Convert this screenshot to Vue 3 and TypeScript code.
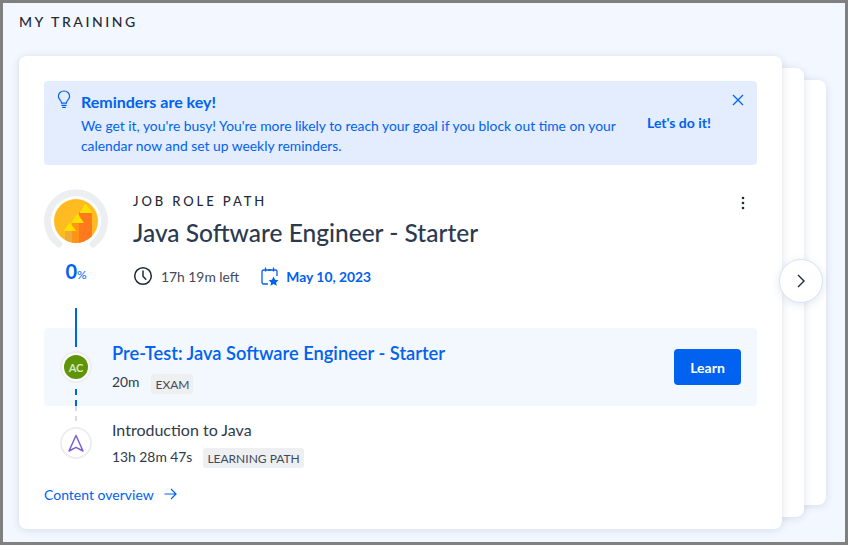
<script setup lang="ts">
interface Step {
  title: string
  time: string
  tag: string
}

const current: Step = { title: 'Pre-Test: Java Software Engineer - Starter', time: '20m', tag: 'EXAM' }
const next: Step = { title: 'Introduction to Java', time: '13h 28m 47s', tag: 'LEARNING PATH' }
</script>

<template>
  <div class="frame">
    <h2 class="page-title">MY TRAINING</h2>
    <div class="stack">
      <div class="back back-far"></div>
      <div class="back back-near"></div>
      <div class="card">
        <div class="reminder">
          <svg class="bulb" width="18" height="20" viewBox="0 0 18 20" fill="none" stroke="#0062ee" stroke-width="1.2" stroke-linecap="round">
            <path d="M6.6 13.2c0-1.6-.7-2.4-1.6-3.4C4.1 8.800 3.400 7.700 3.400 6.300 3.400 3.300 5.900 1 9 1s5.600 2.300 5.600 5.300c0 1.400-.7 2.500-1.600 3.500-.9 1-1.600 1.800-1.600 3.400z" />
            <path d="M6.800 15.300h4.400M7.600 17.300h2.800" />
          </svg>
          <div class="reminder-text">
            <strong>Reminders are key!</strong>
            <p>We get it, you're busy! You're more likely to reach your goal if you block out time on your calendar now and set up weekly reminders.</p>
          </div>
          <a class="reminder-action">Let's do it!</a>
          <svg class="close" width="12" height="12" viewBox="0 0 12 12" stroke="#0062ee" stroke-width="1.300" fill="none">
            <path d="M1 1l10 10M11 1L1 11" />
          </svg>
        </div>

        <div class="path">
          <div class="progress">
            <svg width="64" height="64" viewBox="0 0 64 64">
              <path d="M15 55A28.500 28.500 0 1 1 49 55" fill="none" stroke="#eceef1" stroke-width="7" stroke-linecap="round" />
              <circle cx="32" cy="32" r="22" fill="#ffbb1f" />
              <clipPath id="badge"><circle cx="32" cy="32" r="22" /></clipPath>
              <g clip-path="url(#badge)">
                <rect x="21" y="42" width="11" height="14" fill="#efaa3c" />
                <rect x="28" y="34" width="12" height="22" fill="#ff9419" />
                <rect x="35" y="23" width="13" height="33" fill="#ff7a1c" />
                <path d="M41.500 14.500l7 9.500h-13z" fill="#ffe000" />
                <path d="M33.500 24.500l6.500 9.500h-13z" fill="#ffe000" />
                <path d="M25.500 33.500l7 8.500h-13z" fill="#ffe000" />
              </g>
            </svg>
            <div class="percent">0<small>%</small></div>
          </div>
          <div class="path-info">
            <div class="eyebrow">JOB ROLE PATH</div>
            <h1>Java Software Engineer - Starter</h1>
            <div class="meta">
              <svg width="20" height="20" viewBox="0 0 20 20" fill="none" stroke="#1f2a37" stroke-width="1.500" stroke-linecap="round">
                <circle cx="10" cy="10" r="8.300" />
                <path d="M10 5v5.300l2.800 3" />
              </svg>
              <span class="left">17h 19m left</span>
              <svg class="cal" width="18" height="20" viewBox="0 0 18 20" fill="none" stroke="#0062ee" stroke-width="1.300">
                <path d="M7 18H2.500A1.500 1.500 0 0 1 1 16.500V5.500A1.500 1.500 0 0 1 2.500 4h12A1.500 1.500 0 0 1 16 5.500V10" />
                <path d="M4.500 1.500v4M12.500 1.500v4M7 4h3" />
                <path d="M12.500 10.500l1.700 3.300 3.300.4-2.400 2.300.7 3.300-3.300-1.700-3 1.700.6-3.300-2.400-2.300 3.300-.4z" fill="#0062ee" stroke="none" />
              </svg>
              <span class="date">May 10, 2023</span>
            </div>
          </div>
          <svg class="more" width="4" height="14" viewBox="0 0 4 14" fill="#1f2a37">
            <circle cx="2" cy="2" r="1.300" />
            <circle cx="2" cy="7" r="1.300" />
            <circle cx="2" cy="12" r="1.300" />
          </svg>
        </div>

        <div class="line-top"></div>
        <div class="step step-current">
          <div class="step-marker">
            <div class="avatar"><span>AC</span></div>
          </div>
          <div class="step-body">
            <a class="step-title-current">{{ current.title }}</a>
            <div class="step-meta">
              <span>{{ current.time }}</span>
              <span class="tag">{{ current.tag }}</span>
            </div>
          </div>
          <button class="learn">Learn</button>
          <i class="dash dash-blue"></i>
        </div>
        <div class="step step-next">
          <i class="dash dash-grey"></i>
          <div class="step-marker">
            <div class="avatar avatar-plain">
              <svg width="18" height="19" viewBox="0 0 18 19" fill="none" stroke="#7b5fd0" stroke-width="1.500" stroke-linejoin="round">
                <path d="M9 1.500L16 17l-7-3.600L2 17z" />
              </svg>
            </div>
          </div>
          <div class="step-body">
            <div class="step-title-next">{{ next.title }}</div>
            <div class="step-meta">
              <span>{{ next.time }}</span>
              <span class="tag">{{ next.tag }}</span>
            </div>
          </div>
        </div>

        <a class="overview">
          Content overview
          <svg width="13" height="12" viewBox="0 0 13 12" fill="none" stroke="#0062ee" stroke-width="1.200">
            <path d="M0.500 6h11.500M7 1l5 5-5 5" />
          </svg>
        </a>
      </div>
      <button class="next-btn">
        <svg width="10" height="14" viewBox="0 0 10 14" fill="none" stroke="#1f2a37" stroke-width="1.400">
          <path d="M2 1l6 6-6 6" />
        </svg>
      </button>
    </div>
  </div>
</template>

<style scoped>
.frame {
  box-sizing: border-box;
  width: 848px;
  height: 545px;
  border: 3px solid #808080;
  background: #f3f7ff;
  padding: 0 16px;
  font-family: Lato, "Liberation Sans", sans-serif;
  color: #2a3647;
  overflow: hidden;
}
.page-title {
  margin: 0;
  height: 53px;
  padding-top: 10px;
  box-sizing: border-box;
  font-size: 14px;
  line-height: 17px;
  font-weight: 500;
  letter-spacing: 2.550px;
  color: #1f2a37;
}
.stack {
  display: grid;
  width: 807px;
  height: 473px;
  position: relative;
}
.stack > .back,
.stack > .card {
  grid-area: 1 / 1;
}
.back {
  background: #fff;
  border-radius: 8px;
  box-shadow: 0 1px 8px rgba(40, 60, 110, 0.14);
}
.back-far {
  margin: 24px 0 24px 100px;
}
.back-near {
  margin: 12px 22px 12px 100px;
}
.card {
  position: relative;
  box-sizing: border-box;
  width: 763px;
  height: 473px;
  padding: 25px;
  background: #fff;
  border-radius: 8px;
  box-shadow: 0 1px 8px rgba(40, 60, 110, 0.14);
}
.reminder {
  position: relative;
  display: flex;
  box-sizing: border-box;
  height: 84px;
  padding: 10px 12px;
  background: #e3edfd;
  border-radius: 4px;
  color: #0062ee;
}
.bulb {
  flex: none;
  margin: -1px 0 0 -1px;
}
.reminder-text {
  width: 542px;
  margin-left: 8px;
  font-size: 13.850px;
  line-height: 20px;
}
.reminder-text strong {
  display: block;
  font-size: 16px;
  line-height: 22px;
  font-weight: 700;
}
.reminder-text p {
  margin: 3px 0 0;
}
.reminder-action {
  margin: 22px 0 0 24px;
  font-size: 14px;
  line-height: 20px;
  font-weight: 700;
}
.close {
  position: absolute;
  top: 13px;
  right: 13px;
}
.path {
  position: relative;
  display: flex;
  height: 118px;
  padding-top: 24px;
  box-sizing: content-box;
}
.progress {
  width: 64px;
  flex: none;
  text-align: center;
}
.progress svg {
  display: block;
}
.percent {
  margin-top: 5px;
  font-size: 20px;
  line-height: 26px;
  font-weight: 700;
  color: #0062ee;
}
.percent small {
  font-size: 12px;
  font-weight: 400;
}
.path-info {
  margin-left: 25px;
  padding-top: 5px;
}
.eyebrow {
  font-size: 13px;
  line-height: 15px;
  font-weight: 500;
  letter-spacing: 2.900px;
  color: #1f2a37;
}
.path-info h1 {
  margin: 9px 0 0;
  font-size: 24.500px;
  line-height: 30px;
  font-weight: 500;
  color: #2b3a4f;
}
.meta {
  display: flex;
  align-items: center;
  margin-top: 18px;
  height: 20px;
  font-size: 13.850px;
}
.left {
  margin-left: 8px;
  color: #3f4a5a;
}
.cal {
  margin-left: 22px;
}
.date {
  margin-left: 7px;
  font-weight: 700;
  color: #0062ee;
}
.more {
  position: absolute;
  top: 31px;
  right: 12px;
}
.line-top {
  width: 2px;
  height: 20px;
  margin: 1px 0 0 31px;
  background: #0062ee;
  position: relative;
}
.line-top::after {
  content: "";
  position: absolute;
  top: 20px;
  left: 0;
  width: 2px;
  height: 19px;
  background: #0062ee;
  z-index: 1;
}
.step {
  position: relative;
  display: flex;
  align-items: center;
}
.step-current {
  box-sizing: border-box;
  height: 78px;
  padding-right: 16px;
  background: #f3f7fe;
  border-radius: 4px;
}
.step-next {
  height: 74px;
}
.step-marker {
  flex: none;
  display: flex;
  justify-content: center;
  width: 64px;
}
.avatar {
  box-sizing: border-box;
  display: flex;
  align-items: center;
  justify-content: center;
  width: 32px;
  height: 32px;
  border-radius: 50%;
  background: #fff;
  border: 2px solid #eceef1;
}
.avatar span {
  display: flex;
  align-items: center;
  justify-content: center;
  width: 24px;
  height: 24px;
  border-radius: 50%;
  background: #5f9408;
  font-size: 11px;
  font-weight: 700;
  color: #d7e7bf;
}
.step-body {
  flex: 1;
  margin-left: 4px;
}
.step-title-current {
  display: block;
  font-size: 18.300px;
  line-height: 22px;
  font-weight: 600;
  color: #0062ee;
}
.step-title-next {
  font-size: 16px;
  line-height: 20px;
  color: #2f3a4a;
}
.step-meta {
  display: flex;
  align-items: flex-start;
  height: 20px;
  margin-top: 8px;
  font-size: 13.850px;
  line-height: 20px;
  color: #2f3a4a;
}
.step-next .step-meta {
  margin-top: 7px;
}
.tag {
  margin: 2px 0 0 12px;
  padding: 0 4px;
  height: 20px;
  border-radius: 3px;
  background: #eeeff1;
  font-size: 12px;
  line-height: 21px;
  color: #3f4a5a;
}
.step-next .tag {
  margin-top: 1px;
  margin-left: 11px;
}
.learn {
  width: 67px;
  height: 36px;
  border: none;
  border-radius: 4px;
  background: #0062ee;
  color: #fff;
  font-family: Lato, "Liberation Sans", sans-serif;
  font-size: 14px;
  font-weight: 700;
}
.dash {
  position: absolute;
  left: 31px;
  width: 2px;
}
.dash-blue {
  bottom: 0;
  height: 17px;
  background: repeating-linear-gradient(to bottom, #0062ee 0 6px, transparent 6px 11px);
}
.dash-grey {
  top: 0;
  height: 16px;
  background: repeating-linear-gradient(to bottom, #d8dade 0 5px, transparent 5px 10px);
}
.overview {
  display: flex;
  align-items: center;
  gap: 10px;
  height: 20px;
  margin-top: 4px;
  font-size: 14px;
  color: #0062ee;
}
.next-btn {
  position: absolute;
  top: 203px;
  left: 760px;
  display: flex;
  align-items: center;
  justify-content: center;
  width: 44px;
  height: 44px;
  padding: 0;
  border: 1px solid #d6e4fb;
  border-radius: 50%;
  background: #fff;
  box-shadow: 0 2px 8px rgba(40, 60, 110, 0.12);
}
</style>

<style>
body {
  margin: 0;
}
</style>
